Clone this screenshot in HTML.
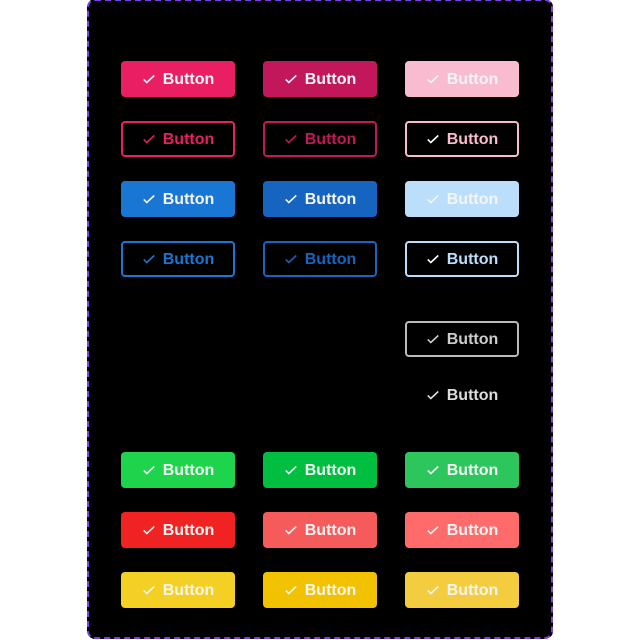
<!DOCTYPE html>
<html><head><style>
html,body{margin:0;padding:0;background:#fff;width:640px;height:640px;overflow:hidden}
.c{position:absolute;left:87px;top:-1px;width:462px;height:636px;background:#000;border:2px dashed #7b3fe4;border-radius:8px}
.b{position:absolute;width:114px;height:36px;box-sizing:border-box;border-radius:4px;display:flex;align-items:center;justify-content:center;font:bold 16px/16px "Liberation Sans",sans-serif;color:#f5f5f5;gap:7px;padding-top:2px}
.b svg{width:14px;height:14px;margin-top:-2px}
.o{background:transparent;border:2px solid}
</style></head><body>
<div class="c"></div>
<div id="r"></div>
<script>
var ck='<svg viewBox="0 0 16 16"><path d="M2 8.5l3.5 3.5L14 4" fill="none" stroke="currentColor" stroke-width="1.8"/></svg>';
var xs=[121,263,405];
var rows=[
[61,'f',['#e91e63','#c2185b','#f8bbd0']],
[121,'o',['#e91e63','#c2185b','#f8bbd0']],
[181,'f',['#1976d2','#1565c0','#bbdefb']],
[241,'o',['#1976d2','#1565c0','#bbdefb']],
[452,'f',['#1ed44c','#00bf40','#2cc65d']],
[512,'f',['#f02222','#f65b5b','#ff6b6b']],
[572,'f',['#f3d023','#f2c200','#f4cc40']]];
var h='';
rows.forEach(function(r){r[2].forEach(function(c,i){
if(r[1]=='f')h+='<div class="b" style="left:'+xs[i]+'px;top:'+r[0]+'px;background:'+c+'">'+ck+'Button</div>';
else h+='<div class="b o" style="left:'+xs[i]+'px;top:'+r[0]+'px;border-color:'+c+';color:'+c+'"><span style="color:'+(i==2?'#fff':c)+';display:flex">'+ck+'</span>Button</div>';
});});
h+='<div class="b o" style="left:405px;top:321px;border-color:#bbb;color:#ccc">'+ck+'Button</div>';
h+='<div class="b" style="left:405px;top:377px;color:#ddd">'+ck+'Button</div>';
document.getElementById('r').innerHTML=h;
</script>
</body></html>
